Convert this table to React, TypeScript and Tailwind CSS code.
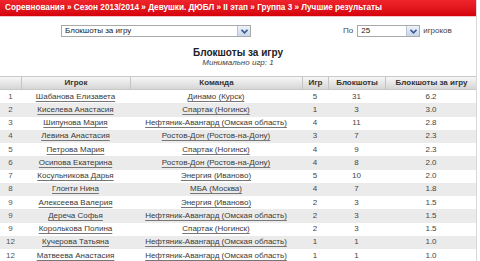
import React from "react"

type Row = [string, string, string, number, number, string]

const rows: Row[] = [
  ["1", "Шабанова Елизавета", "Динамо (Курск)", 5, 31, "6.2"],
  ["2", "Киселева Анастасия", "Спартак (Ногинск)", 1, 3, "3.0"],
  ["3", "Шипунова Мария", "Нефтяник-Авангард (Омская область)", 4, 11, "2.8"],
  ["4", "Левина Анастасия", "Ростов-Дон (Ростов-на-Дону)", 3, 7, "2.3"],
  ["5", "Петрова Мария", "Спартак (Ногинск)", 4, 9, "2.3"],
  ["6", "Осипова Екатерина", "Ростов-Дон (Ростов-на-Дону)", 4, 8, "2.0"],
  ["7", "Косульникова Дарья", "Энергия (Иваново)", 5, 10, "2.0"],
  ["8", "Глонти Нина", "МБА (Москва)", 4, 7, "1.8"],
  ["9", "Алексеева Валерия", "Энергия (Иваново)", 2, 3, "1.5"],
  ["9", "Дереча Софья", "Нефтяник-Авангард (Омская область)", 2, 3, "1.5"],
  ["9", "Королькова Полина", "Спартак (Ногинск)", 2, 3, "1.5"],
  ["12", "Кучерова Татьяна", "Нефтяник-Авангард (Омская область)", 1, 1, "1.0"],
  ["12", "Матвеева Анастасия", "Нефтяник-Авангард (Омская область)", 1, 1, "1.0"],
]

const cols = "grid grid-cols-[21px_109px_172px_26px_57px_92px]"

// little xp-style dropdown arrow button
function DropButton() {
  return (
    <span className="flex h-full w-[13px] items-center justify-center border-l border-[#b9c4d4] bg-gradient-to-b from-[#eef3fb] to-[#c9d6ea]">
      <svg width="7" height="5" viewBox="0 0 7 5">
        <path d="M0.5 0.8 L3.5 3.8 L6.5 0.8" fill="none" stroke="#3c5a94" strokeWidth="1.6" />
      </svg>
    </span>
  )
}

function Select({ value, className }: { value: string; className: string }) {
  return (
    <div className={`flex h-[12px] items-stretch border border-[#a9a9a9] bg-white ${className}`}>
      <span className="flex flex-1 items-center pl-[3px] text-[8px] leading-none text-[#222]">{value}</span>
      <DropButton />
    </div>
  )
}

export default function App() {
  return (
    <div
      className="h-[261px] w-[480px] overflow-hidden bg-white text-[#333]"
      style={{ fontFamily: '"Liberation Sans", Arial, sans-serif' }}
    >
      <div className="w-[477px] border-r border-[#d8d8d8]">
        <div className="flex h-[16px] items-center bg-gradient-to-b from-[#f0242c] to-[#d4000a] pl-[5px] text-[8.2px] font-bold text-white">
          Соревнования » Сезон 2013/2014 » Девушки. ДЮБЛ » II этап » Группа 3 » Лучшие результаты
        </div>
        <div className="h-px bg-[#f6c2c4]" />

        <div className="mt-[7px] flex h-[14px] items-center">
          <Select value="Блокшоты за игру" className="ml-[61px] w-[190px]" />
          <span className="ml-[92px] text-[8px] text-[#444]">По</span>
          <Select value="25" className="ml-[4px] w-[63px]" />
          <span className="ml-[3px] text-[8px] text-[#444]">игроков</span>
        </div>

        <div className="flex flex-col items-center pt-[10px]">
          <div className="text-[10px] font-bold leading-[10px] text-[#222]">Блокшоты за игру</div>
          <div className="text-[8px] italic leading-[9px] text-[#444]">Минимально игр: 1</div>
        </div>

        <div
          className={`${cols} mt-[9px] h-[14px] border-y border-[#c8c8c8] bg-gradient-to-b from-[#f7f7f7] to-[#d6d6d6] text-[8px] font-bold text-[#333]`}
        >
          {["", "Игрок", "Команда", "Игр", "Блокшоты", "Блокшоты за игру"].map((h, i) => (
            <div
              key={i}
              className={`flex items-center justify-center ${i > 0 ? "border-l border-[#c4c4c4]" : ""}`}
            >
              {h}
            </div>
          ))}
        </div>

        {rows.map((r, i) => (
          <div
            key={i}
            className={`${cols} h-[13.25px] text-[8px] leading-none ${i % 2 === 1 ? "bg-[#ebebeb]" : "bg-white"}`}
          >
            <div className="flex items-center justify-center text-[#555]">{r[0]}</div>
            <div className="flex items-center justify-center">
              <a className="text-[#3a3a3a] underline decoration-[#777] underline-offset-[1.5px]">{r[1]}</a>
            </div>
            <div className="flex items-center justify-center">
              <a className="text-[#3a3a3a] underline decoration-[#777] underline-offset-[1.5px]">{r[2]}</a>
            </div>
            <div className="flex items-center justify-center text-[#444]">{r[3]}</div>
            <div className="flex items-center justify-center text-[#444]">{r[4]}</div>
            <div className="flex items-center justify-center text-[#444]">{r[5]}</div>
          </div>
        ))}
      </div>
    </div>
  )
}
